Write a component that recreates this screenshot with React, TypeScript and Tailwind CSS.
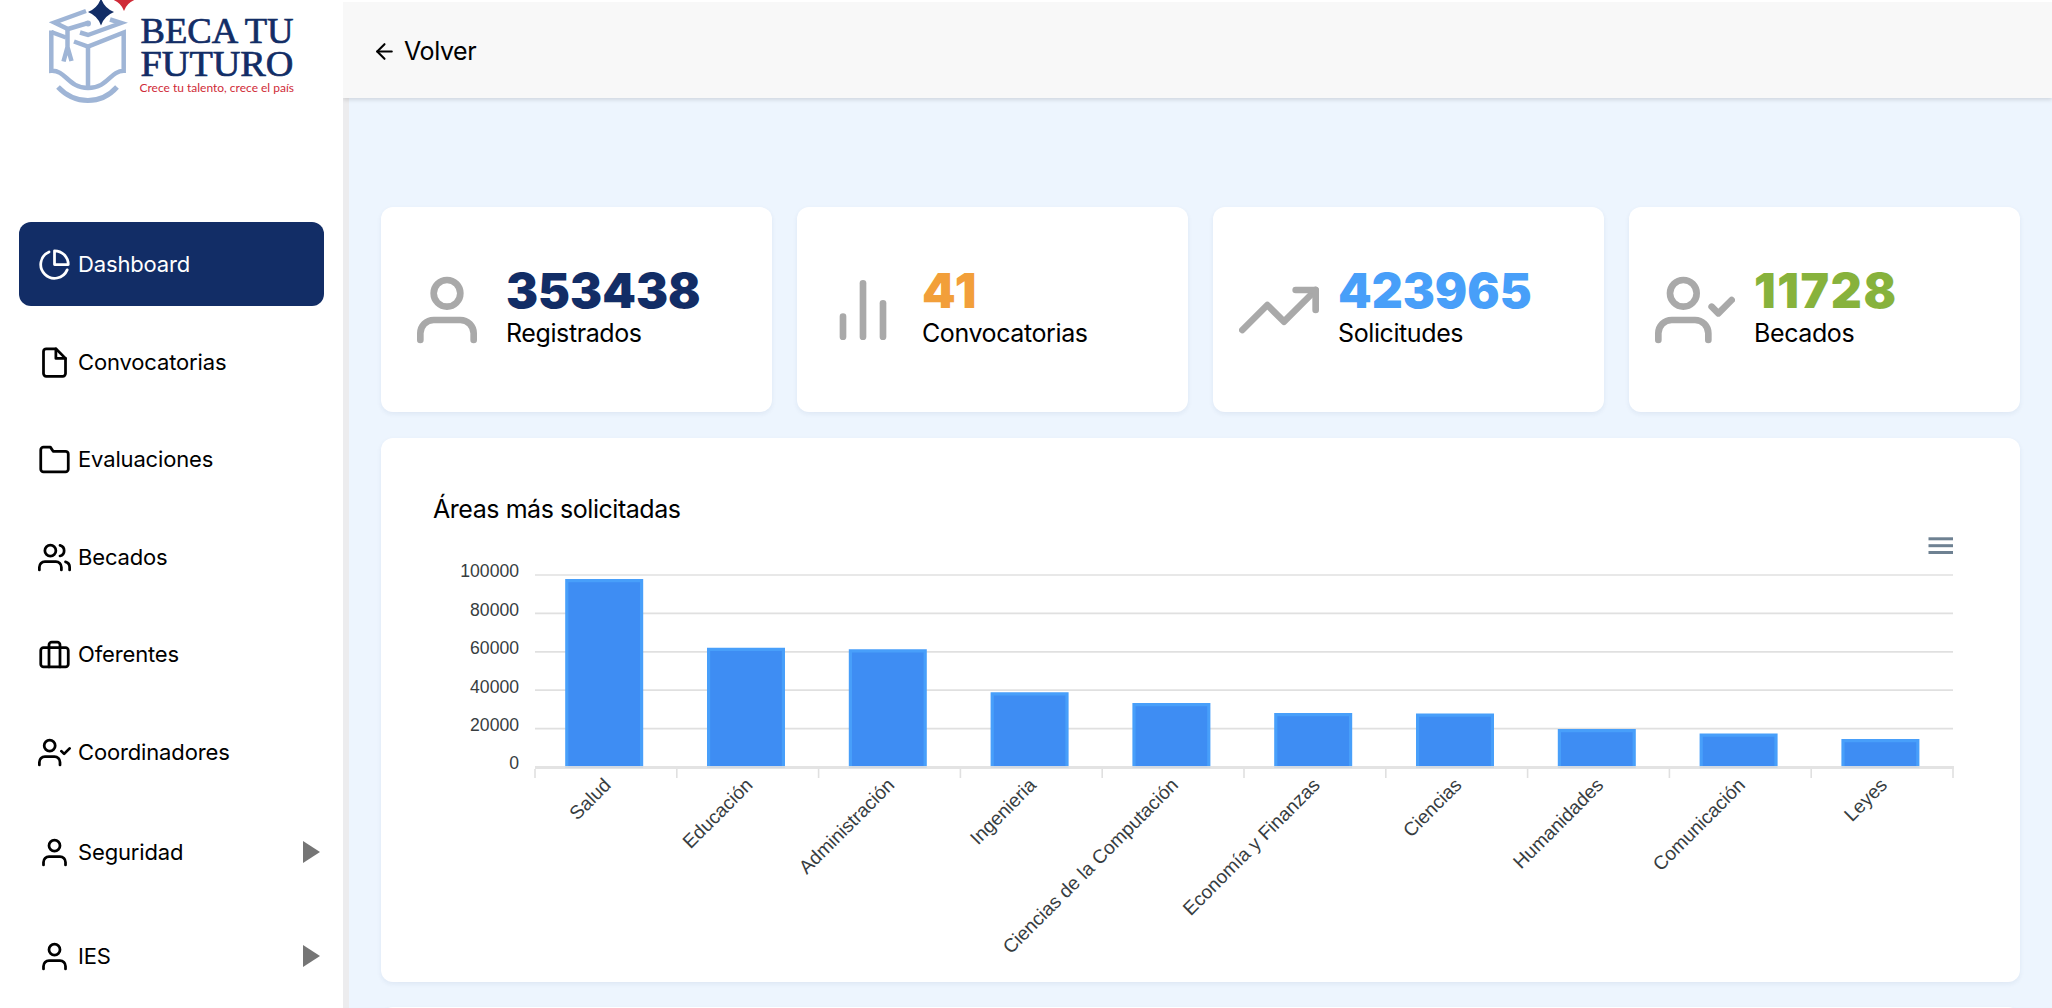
import type { ReactNode } from "react";
import type { IconType } from "react-icons";
import {
  FiArrowLeft, FiPieChart, FiFile, FiFolder, FiUsers, FiBriefcase, FiUserCheck, FiUser, FiBarChart2, FiTrendingUp,
} from "react-icons/fi";

const menu: { label: string; icon: IconType; box: string; active?: boolean; arrow?: boolean }[] = [
  { label: "Dashboard", icon: FiPieChart, box: "h-[84px] mb-[14px]", active: true },
  { label: "Convocatorias", icon: FiFile, box: "h-[84px] mb-[13px]" },
  { label: "Evaluaciones", icon: FiFolder, box: "h-[84px] mb-[14px]" },
  { label: "Becados", icon: FiUsers, box: "h-[84px] mb-[13px]" },
  { label: "Oferentes", icon: FiBriefcase, box: "h-[84px] mb-[14px]" },
  { label: "Coordinadores", icon: FiUserCheck, box: "h-[84px] mb-[13px]" },
  { label: "Seguridad", icon: FiUser, box: "h-[90px] mb-[14px]", arrow: true },
  { label: "IES", icon: FiUser, box: "h-[90px]", arrow: true },
];

const stats: { value: string; label: string; icon: IconType; style: string }[] = [
  { value: "353438", label: "Registrados", icon: FiUser, style: "text-[#122d66]" },
  { value: "41", label: "Convocatorias", icon: FiBarChart2, style: "text-[#f29f3a] tracking-[1.7px]" },
  { value: "423965", label: "Solicitudes", icon: FiTrendingUp, style: "text-[#489ff9]" },
  { value: "11728", label: "Becados", icon: FiUserCheck, style: "text-[#87b23c] tracking-[1.6px]" },
];

const bars = [
  { label: "Salud", top: 579 },
  { label: "Educación", top: 647.8 },
  { label: "Administración", top: 649.2 },
  { label: "Ingenieria", top: 692.3 },
  { label: "Ciencias de la Computación", top: 703 },
  { label: "Economía y Finanzas", top: 713 },
  { label: "Ciencias", top: 713.6 },
  { label: "Humanidades", top: 729 },
  { label: "Comunicación", top: 733.6 },
  { label: "Leyes", top: 739 },
];

const ticks = [100000, 80000, 60000, 40000, 20000, 0];

function Logo() {
  return (
    <svg width="300" height="110" viewBox="0 0 300 110" className="block" aria-label="Beca tu futuro">
      <g fill="none" stroke="#9fb5d6" strokeWidth="4.500">
        <path d="M86 11 L54.500 22.500 L68 29 L88 23" />
        <path d="M110 19.500 L121 23 L88 35 L80 32.500" />
        <path d="M67.500 29 V50 M67.500 47 L63.500 61.500 M67.500 47 L71.500 61" />
        <path d="M51.300 30.500 V70.800 C66 70 68 88 88 88 C108 88 110 71 123.700 70.800 V32.500 L88 46.500 L74 41.500" />
        <path d="M51.300 32 L66 37.500 M88 46 V88" />
        <path d="M58 87 C75 105 101 105 117 87" strokeWidth="5" />
      </g>
      <circle cx="88" cy="23.500" r="3" fill="#9fb5d6" />
      <path d="M101 -2 Q104 8 114 12 Q104 16 101 25.500 Q98 16 88 12 Q98 8 101 -2Z" fill="#122d66" />
      <path d="M124 -14 Q127 -4 137 -1 Q127 2 124 11 Q121 2 111 -1 Q121 -4 124 -14Z" fill="#cf2a37" />
      <g fill="#122d66" stroke="#122d66" strokeWidth=".7" fontFamily="'Liberation Serif', serif" fontSize="36.500">
        <text x="140.500" y="42.700" textLength="153" lengthAdjust="spacingAndGlyphs">BECA TU</text>
        <text x="140.500" y="75.500" textLength="153" lengthAdjust="spacingAndGlyphs">FUTURO</text>
      </g>
      <text x="139.500" y="92" fontSize="11.500" fill="#cf2a37" fontFamily="Lato, sans-serif" textLength="154.500" lengthAdjust="spacingAndGlyphs">
        Crece tu talento, crece el país
      </text>
    </svg>
  );
}

function Card({ className, children }: { className: string; children?: ReactNode }) {
  return <section className={`rounded-xl bg-white shadow-[0_2px_5px_rgba(30,50,110,0.07)] ${className}`}>{children}</section>;
}

function AreasChart() {
  const left = 535;
  const step = 141.8;
  return (
    <svg width="1639" height="453" viewBox="381 529 1639 453" className="block" fontFamily="'Liberation Sans', Arial, sans-serif" fill="#373d3f">
      <g fill="#6e8192">
        <rect x="1928.500" y="537.300" width="24.500" height="3" />
        <rect x="1928.500" y="544.200" width="24.500" height="3" />
        <rect x="1928.500" y="551" width="24.500" height="3" />
      </g>
      {ticks.map((t, i) => (
        <g key={t}>
          {t > 0 && <line x1={left} x2={1953} y1={575 + i * 38.4} y2={575 + i * 38.4} stroke="#e0e0e0" strokeWidth="1.700" />}
          <text x="519" y={577.4 + i * 38.4} textAnchor="end" fontSize="17.600">{t}</text>
        </g>
      ))}
      {bars.map((b, i) => {
        const x = 565.2 + i * step;
        return (
          <g key={b.label}>
            <rect x={x + 1.6} y={b.top + 1.6} width={74.8} height={768 - b.top - 1.6} fill="#3e8df3" />
            <path d={`M${x + 1.6} 768 V${b.top + 1.6} H${x + 76.4} V768`} fill="none" stroke="#489ffa" strokeWidth="3.200" />
            <text transform={`translate(${x + 46.8} 786.3) rotate(-45)`} textAnchor="end" fontSize="19.150">{b.label}</text>
          </g>
        );
      })}
      <line x1={left} x2={1954} y1={767.5} y2={767.5} stroke="#e0e0e0" strokeWidth="3" strokeOpacity=".9" />
      {Array.from({ length: 11 }, (_, i) => (
        <line key={i} x1={left + i * step} x2={left + i * step} y1="769" y2="778" stroke="#e0e0e0" strokeWidth="1.600" />
      ))}
    </svg>
  );
}

export default function App() {
  return (
    <div className="flex h-[1008px] w-[2052px] overflow-hidden bg-white font-[Inter,sans-serif] text-black">
      <aside className="w-[343px] shrink-0">
        <div className="h-[222px]"><Logo /></div>
        <nav className="mx-[19px] flex flex-col">
          {menu.map(({ label, icon: Icon, box, active, arrow }) => (
            <a key={label} className={`flex shrink-0 items-center rounded-xl pl-[19px] pr-[4px] ${box} ${active ? "bg-[#122d66] text-white" : ""}`}>
              <Icon size={33} />
              <span className="ml-[7px] text-[22px] tracking-[-0.15px]">{label}</span>
              {arrow && <svg className="ml-auto" width="17" height="22" viewBox="0 0 17 22"><path d="M0 0 L17 11 L0 22Z" fill="#757575" /></svg>}
            </a>
          ))}
        </nav>
      </aside>
      <div className="flex min-w-0 flex-1 flex-col pt-[2px]">
        <header className="z-10 flex h-24 shrink-0 items-center bg-[#f8f8f8] pl-[29px] pt-[3px] shadow-[0_2px_4px_rgba(0,0,0,0.12)] [clip-path:inset(0_0_-8px_0)]">
          <FiArrowLeft size={25} />
          <span className="ml-[7px] text-[25px] tracking-[-0.4px]">Volver</span>
        </header>
        <main className="flex-1 border-l-[6px] border-[#ececee] bg-[#edf5fe] pl-8 pr-8 pt-[109px]">
          <div className="grid grid-cols-4 gap-[25px]">
            {stats.map(({ value, label, icon: Icon, style }) => (
              <Card key={label} className="flex h-[205px] items-center pl-[26px]">
                <Icon size={80} className="text-[#a9a9a9]" />
                <div className="ml-[19px] pb-[2px]">
                  <div className={`text-[48px] font-black leading-[48px] ${style}`}>{value}</div>
                  <div className="text-[25px] leading-[36px] tracking-[-0.4px]">{label}</div>
                </div>
              </Card>
            ))}
          </div>
          <Card className="mt-[26px] h-[544px]">
            <h2 className="h-[91px] pl-[52px] pt-[54px] text-[25px] leading-[34px] tracking-[-0.45px]">Áreas más solicitadas</h2>
            <AreasChart />
          </Card>
          <Card className="mt-[25px] h-[205px]" />
        </main>
      </div>
    </div>
  );
}
